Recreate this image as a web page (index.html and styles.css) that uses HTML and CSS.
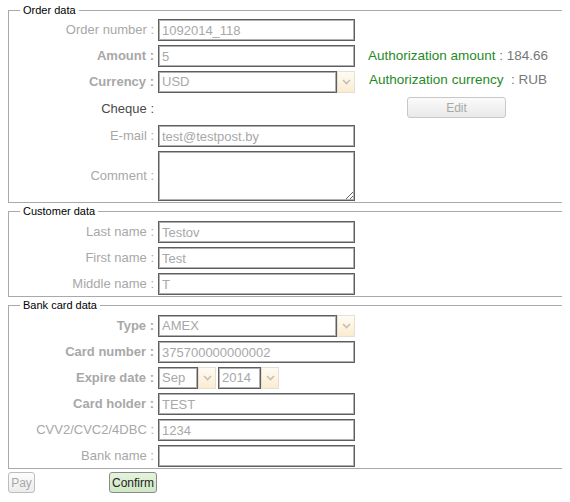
FILE: index.html
```html
<!DOCTYPE html>
<html>
<head>
<meta charset="utf-8">
<link rel="stylesheet" href="styles.css">
</head>
<body>
<form class="payform">
  <fieldset class="group">
    <legend>Order data</legend>
    <div class="grid">
      <label class="lbl">Order number :</label>
      <input class="field" value="1092014_118">
      <div class="side"></div>

      <label class="lbl bold">Amount :</label>
      <input class="field" value="5">
      <div class="side"><span class="green">Authorization amount</span> : 184.66</div>

      <label class="lbl bold">Currency :</label>
      <div class="select wide"><span class="sval">USD</span><span class="arrow"><svg width="9" height="6" viewBox="0 0 9 6"><path d="M1 1 L4.5 4.5 L8 1" fill="none" stroke="#c4c0b8" stroke-width="1.6"/></svg></span></div>
      <div class="side cur"><span class="green">Authorization currency</span> &nbsp;: RUB</div>

      <label class="lbl dark tall">Cheque :</label>
      <div class="empty"></div>
      <div class="side tall"><button type="button" class="btn edit">Edit</button></div>

      <label class="lbl">E-mail :</label>
      <input class="field" value="test@testpost.by">
      <div class="side"></div>

      <label class="lbl area-lbl">Comment :</label>
      <textarea class="field area"></textarea>
      <div class="side"></div>
    </div>
  </fieldset>

  <fieldset class="group">
    <legend>Customer data</legend>
    <div class="grid">
      <label class="lbl">Last name :</label>
      <input class="field" value="Testov">
      <div class="side"></div>

      <label class="lbl">First name :</label>
      <input class="field" value="Test">
      <div class="side"></div>

      <label class="lbl">Middle name :</label>
      <input class="field" value="T">
      <div class="side"></div>
    </div>
  </fieldset>

  <fieldset class="group">
    <legend>Bank card data</legend>
    <div class="grid">
      <label class="lbl bold">Type :</label>
      <div class="select wide"><span class="sval">AMEX</span><span class="arrow"><svg width="9" height="6" viewBox="0 0 9 6"><path d="M1 1 L4.5 4.5 L8 1" fill="none" stroke="#c4c0b8" stroke-width="1.6"/></svg></span></div>
      <div class="side"></div>

      <label class="lbl bold">Card number :</label>
      <input class="field" value="375700000000002">
      <div class="side"></div>

      <label class="lbl bold">Expire date :</label>
      <div class="dates">
        <div class="select month"><span class="sval">Sep</span><span class="arrow"><svg width="9" height="6" viewBox="0 0 9 6"><path d="M1 1 L4.5 4.5 L8 1" fill="none" stroke="#c4c0b8" stroke-width="1.6"/></svg></span></div>
        <div class="select year"><span class="sval">2014</span><span class="arrow"><svg width="9" height="6" viewBox="0 0 9 6"><path d="M1 1 L4.5 4.5 L8 1" fill="none" stroke="#c4c0b8" stroke-width="1.6"/></svg></span></div>
      </div>
      <div class="side"></div>

      <label class="lbl bold">Card holder :</label>
      <input class="field" value="TEST">
      <div class="side"></div>

      <label class="lbl">CVV2/CVC2/4DBC :</label>
      <input class="field" value="1234">
      <div class="side"></div>

      <label class="lbl">Bank name :</label>
      <input class="field" value="">
      <div class="side"></div>
    </div>
  </fieldset>

  <div class="actions">
    <button type="button" class="btn pay">Pay</button>
    <button type="button" class="btn confirm">Confirm</button>
  </div>
</form>
</body>
</html>
```

FILE: styles.css
```css
html {
  overflow: hidden;
}
body {
  margin: 2px 8px 0;
  font-family: "Liberation Sans", Arial, sans-serif;
  font-size: 13px;
  color: #a8a8a8;
  background: #fff;
}
.payform {
  margin: 0;
}
.group {
  margin: 0 -30px 0 0;
  border: 1px solid #a9a9a9;
  padding: 1px 0 1px 0;
  min-width: 0;
}
.group + .group {
  padding-top: 2px;
}
.group legend {
  margin-left: 11px;
  padding: 0 3px;
  font-size: 11px;
  line-height: 16px;
  color: #000;
}
.grid {
  display: grid;
  grid-template-columns: 145px 197px 196px;
  column-gap: 4px;
  row-gap: 4px;
  align-items: center;
}
.lbl {
  text-align: right;
  line-height: 22px;
  white-space: nowrap;
  color: #a8a8a8;
}
.lbl.bold {
  font-weight: bold;
}
.lbl.dark {
  color: #4a4a4a;
}
.tall {
  height: 24px;
  line-height: 24px;
}
.empty {
  height: 24px;
}
.field {
  box-sizing: border-box;
  width: 197px;
  height: 22px;
  margin: 0;
  padding: 0 3px;
  border: 1px solid #5e5e5e;
  box-shadow: inset 0 0 0 1px #b0b0b0;
  font-family: "Liberation Sans", Arial, sans-serif;
  font-size: 13px;
  color: #a8a8a8;
  background: #fff;
  outline: none;
}
.area {
  height: 50px;
  resize: both;
  display: block;
}
.side {
  text-align: center;
  color: #777;
  white-space: nowrap;
  font-size: 13.5px;
  line-height: 22px;
  padding-left: 2px;
}
.side.cur {
  line-height: 18px;
  align-self: start;
}
.green {
  color: #1f8a1f;
}
.select {
  display: flex;
  height: 22px;
  box-sizing: border-box;
}
.select .sval {
  box-sizing: border-box;
  height: 22px;
  padding: 0 3px;
  line-height: 20px;
  border: 1px solid #5e5e5e;
  box-shadow: inset 0 0 0 1px #b0b0b0;
  color: #a8a8a8;
  background: #fff;
}
.select .arrow {
  box-sizing: border-box;
  width: 18px;
  height: 22px;
  border: 1px solid #e4e0d6;
  background: linear-gradient(#fffbf3, #fbecd0);
  display: flex;
  align-items: center;
  justify-content: center;
}
.select.wide .sval {
  width: 179px;
}
.dates {
  display: flex;
  gap: 2px;
}
.select.month .sval {
  width: 40px;
}
.select.year .sval {
  width: 43px;
}
.btn {
  box-sizing: border-box;
  font-family: "Liberation Sans", Arial, sans-serif;
  font-size: 12px;
  height: 21px;
  margin: 0;
  padding: 0;
  border-radius: 3px;
  cursor: default;
}
.edit {
  width: 99px;
  margin-left: 46px;
  display: block;
  border: 1px solid #c8c8c8;
  background: linear-gradient(#fbfbfb, #e9e9e9);
  color: #a8a8a8;
}
.actions {
  display: flex;
  padding-top: 3px;
}
.pay {
  width: 27px;
  border: 1px solid #bdbdbd;
  background: linear-gradient(#fdfdfd, #ececec);
  color: #a8a8a8;
}
.confirm {
  width: 48px;
  margin-left: 74px;
  border: 1px solid #8a8a8a;
  background: linear-gradient(#e4f3dd, #cfe8c4);
  color: #222;
}
```
